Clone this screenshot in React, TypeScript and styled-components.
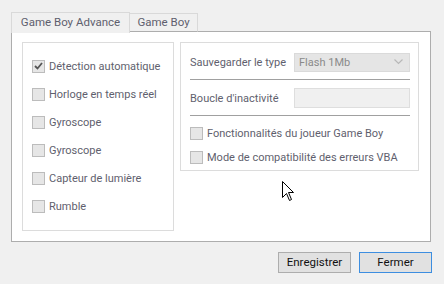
import React from 'react'
import styled, { createGlobalStyle } from 'styled-components'

const GlobalStyle = createGlobalStyle`
  html, body {
    margin: 0;
    padding: 0;
    background: #f0f0f0;
  }
  body {
    font-family: Roboto, "Liberation Sans", sans-serif;
    font-size: 11px;
  }
`

const Window = styled.div`
  position: relative;
  width: 444px;
  height: 284px;
  box-sizing: border-box;
  padding: 11px 12px 0 11px;
  background: #f0f0f0;
  color: #5f5f6e;
`

const TabStrip = styled.div`
  display: flex;
  align-items: flex-end;
  height: 21px;
  position: relative;
  z-index: 1;
`

const Tab = styled.div<{ active?: boolean; w: number }>`
  box-sizing: border-box;
  width: ${(p) => p.w}px;
  height: ${(p) => (p.active ? '21px' : '19px')};
  margin-bottom: ${(p) => (p.active ? '-1px' : '0')};
  border: 1px solid #d9d9d9;
  border-bottom: ${(p) => (p.active ? 'none' : '1px solid #adadad')};
  border-left: ${(p) => (p.active ? '1px solid #d9d9d9' : 'none')};
  background: #f0f0f0;
  display: flex;
  align-items: center;
  justify-content: center;
  padding-bottom: ${(p) => (p.active ? '1px' : '0')};
  font-size: 11.5px;
  line-height: 1;
  white-space: nowrap;
`

const Panel = styled.div`
  box-sizing: border-box;
  width: 420px;
  height: 211px;
  margin-top: -1px;
  border: 1px solid #adadad;
  background: #fff;
  padding: 10px 0 0 10px;
  display: flex;
  align-items: flex-start;
  gap: 6px;
`

const Group = styled.div<{ w: number; h: number }>`
  box-sizing: border-box;
  width: ${(p) => p.w}px;
  height: ${(p) => p.h}px;
  border: 1px solid #dcdcdc;
  display: flex;
  flex-direction: column;
`

const LeftList = styled.div`
  padding: 9px 0 0 9px;
  display: flex;
  flex-direction: column;
`

const CheckRow = styled.label<{ h: number }>`
  display: flex;
  align-items: center;
  height: ${(p) => p.h}px;
  gap: 4px;
  white-space: nowrap;
`

const Box = styled.span`
  box-sizing: border-box;
  width: 13px;
  height: 13px;
  border: 1px solid #bcbcbc;
  background: #e6e6e6;
  display: flex;
  align-items: center;
  justify-content: center;
  flex: none;
`

const RightBody = styled.div`
  padding: 8px 8px 0 9px;
  display: flex;
  flex-direction: column;
`

const FieldRow = styled.div`
  display: flex;
  align-items: center;
  justify-content: space-between;
  height: 22px;
  white-space: nowrap;
`

const Select = styled.div`
  box-sizing: border-box;
  width: 116px;
  height: 19px;
  border: 1px solid #dadada;
  background: #e5e5e5;
  color: #8a8a8a;
  display: flex;
  align-items: center;
  justify-content: space-between;
  padding: 0 6px 0 4px;
`

const TextInput = styled.div`
  box-sizing: border-box;
  width: 116px;
  height: 20px;
  border: 1px solid #dedede;
  background: #f0f0f0;
`

const Separator = styled.div<{ top: number; bottom: number }>`
  height: 1px;
  background: #a0a0a0;
  margin: ${(p) => p.top}px 0 ${(p) => p.bottom}px;
`

const ButtonBar = styled.div`
  display: flex;
  justify-content: flex-end;
  gap: 8px;
  margin-top: 10px;
`

const Button = styled.button<{ focused?: boolean }>`
  box-sizing: border-box;
  width: 73px;
  height: 21px;
  border: 1px solid ${(p) => (p.focused ? '#3d8ee0' : '#adadad')};
  background: #e1e1e1;
  color: #111;
  font-family: Roboto, "Liberation Sans", sans-serif;
  font-size: 11.5px;
  padding: 0;
  line-height: 1;
`

const Cursor = styled.svg`
  position: absolute;
  left: 282px;
  top: 181px;
`

const Check = ({ checked, label, h }: { checked?: boolean; label: string; h: number }) => (
  <CheckRow h={h}>
    <Box>
      {checked && (
        <svg width="9" height="8" viewBox="0 0 9 8">
          <path d="M1 4 L3.5 6.5 L8 1" stroke="#555" strokeWidth="1.8" fill="none" />
        </svg>
      )}
    </Box>
    {label}
  </CheckRow>
)

const App: React.FC = () => {
  const leftItems = [
    { label: 'Détection automatique', checked: true },
    { label: 'Horloge en temps réel' },
    { label: 'Gyroscope' },
    { label: 'Gyroscope' },
    { label: 'Capteur de lumière' },
    { label: 'Rumble' },
  ]

  return (
    <Window>
      <GlobalStyle />
      <TabStrip>
        <Tab active w={119}>Game Boy Advance</Tab>
        <Tab w={68}>Game Boy</Tab>
      </TabStrip>
      <Panel>
        <Group w={152} h={189}>
          <LeftList>
            {leftItems.map((it, i) => (
              <Check key={i} h={28} label={it.label} checked={it.checked} />
            ))}
          </LeftList>
        </Group>
        <Group w={239} h={129}>
          <RightBody>
            <FieldRow>
              <span>Sauvegarder le type</span>
              <Select>
                <span>Flash 1Mb</span>
                <svg width="9" height="6" viewBox="0 0 9 6">
                  <path d="M0.5 0.5 L4.5 4.5 L8.5 0.5" stroke="#b8b8b8" strokeWidth="1.2" fill="none" />
                </svg>
              </Select>
            </FieldRow>
            <Separator top={6} bottom={7} />
            <FieldRow>
              <span>Boucle d'inactivité</span>
              <TextInput />
            </FieldRow>
            <Separator top={6} bottom={5} />
            <Check h={24} label="Fonctionnalités du joueur Game Boy" />
            <Check h={25} label="Mode de compatibilité des erreurs VBA" />
          </RightBody>
        </Group>
      </Panel>
      <ButtonBar>
        <Button>Enregistrer</Button>
        <Button focused>Fermer</Button>
      </ButtonBar>
      <Cursor width="13" height="21" viewBox="0 0 13 21">
        <path
          d="M0.5 0.5 L0.5 16.5 L4.5 12.5 L7.5 19.5 L9.5 18.5 L6.5 11.5 L11.5 11.5 Z"
          fill="#fff"
          stroke="#000"
          strokeWidth="1"
        />
      </Cursor>
    </Window>
  )
}

export default App
